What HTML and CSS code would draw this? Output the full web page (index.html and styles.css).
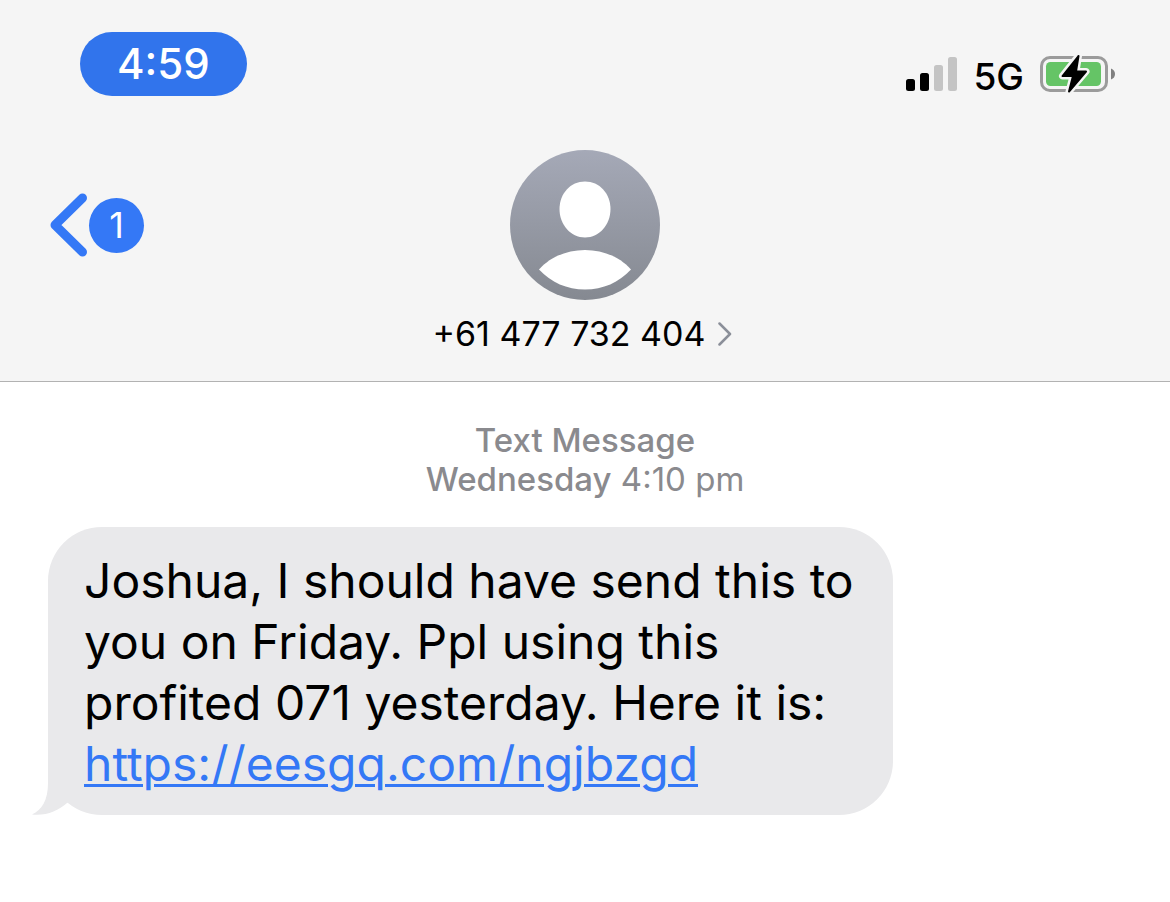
FILE: index.html
```html
<!DOCTYPE html>
<html lang="en">
<head>
<meta charset="utf-8">
<meta name="viewport" content="width=device-width, initial-scale=1">
<title>Messages</title>
<link rel="stylesheet" href="styles.css">
</head>
<body>
<header class="header">
  <div class="status">
    <time class="clock">4:59</time>
    <div class="indicators">
      <svg class="signal" viewBox="0 0 51 34" role="img" aria-label="Signal: 2 of 4 bars">
        <rect x="0" y="22" width="9" height="12" rx="2.5"/>
        <rect x="14" y="16" width="9" height="18" rx="2.5"/>
        <rect class="off" x="28" y="8" width="9" height="26" rx="2.5"/>
        <rect class="off" x="42" y="0" width="9" height="34" rx="2.5"/>
      </svg>
      <span class="network">5G</span>
      <svg class="battery" viewBox="0 0 76 42" role="img" aria-label="Battery charging">
        <rect x="1.5" y="4.5" width="65" height="33" rx="8.5" fill="none" stroke="#9b9b9b" stroke-width="3"/>
        <rect x="6" y="9" width="55" height="24" rx="4.5" fill="#65c466"/>
        <path d="M71 15.500q4 1.500 4 5.500t-4 5.500z" fill="#808080"/>
        <path d="M38.500 3L22.500 23h10.500L29 38.500L46 18.500H36z" fill="#000" stroke="#f5f5f5" stroke-width="7" stroke-linejoin="round"/>
        <path d="M38.500 3L22.500 23h10.500L29 38.500L46 18.500H36z" fill="#000" stroke="#000" stroke-width="2" stroke-linejoin="round"/>
      </svg>
    </div>
  </div>
  <nav class="nav">
    <a class="back" href="#" aria-label="Back, 1 unread">
      <svg class="back-arrow" viewBox="0 0 40 64" aria-hidden="true"><path d="M34.500 5L7 32L34.500 59" fill="none" stroke="#3478f6" stroke-width="9" stroke-linecap="round" stroke-linejoin="round"/></svg>
      <span class="badge">1</span>
    </a>
    <a class="contact" href="#">
      <svg class="avatar" viewBox="0 0 150 150" aria-hidden="true">
        <defs><linearGradient id="shade" x1="0" y1="0" x2="0" y2="1"><stop offset="0" stop-color="#a5a9b7"/><stop offset="1" stop-color="#858991"/></linearGradient></defs>
        <circle cx="75" cy="75" r="75" fill="url(#shade)"/>
        <path d="M75 31.500c14.500 0 25.500 12 25.500 27.500S89.500 87.500 75 87.500 49.500 74.500 49.500 59 60.500 31.500 75 31.500z" fill="#fff"/>
        <path d="M29 119.500C40 107 57 100 75 100s35 7 46 19.500C109 132.500 93 139.500 75 139.500S41 132.500 29 119.500z" fill="#fff"/>
      </svg>
      <span class="number">+61 477 732 404
        <svg class="chevron" viewBox="0 0 14 24" aria-hidden="true"><path d="M1.500 1.500L12 12L1.500 22.500" fill="none" stroke="#8b8f99" stroke-width="2.500" stroke-linecap="round" stroke-linejoin="round"/></svg>
      </span>
    </a>
  </nav>
</header>
<main class="thread">
  <p class="stamp"><span class="strong">Text Message</span><br><span class="strong">Wednesday</span> 4:10 pm</p>
  <div class="bubble">
    <p class="message">Joshua, I should have send this to you on Friday. Ppl using this profited 071 yesterday. Here it is: <a class="link" href="#">https://eesgq.com/ngjbzgd</a></p>
    <svg class="tail" viewBox="0 0 52 54" aria-hidden="true"><path d="M16 0V22C16 39 10 49 0 53.500C14 55 26 50 35 42L52 30V0z" fill="#e9e9eb"/></svg>
  </div>
</main>
</body>
</html>
```
FILE: styles.css
```css
* { box-sizing: border-box; }
body {
  margin: 0;
  background: #fff;
  color: #000;
  font-family: Inter, "Liberation Sans", sans-serif;
}
p { margin: 0; }
a { color: inherit; text-decoration: none; }
svg { display: block; flex: none; }

.header {
  padding: 32px 48px 26px;
  background: #f5f5f5;
  border-bottom: 1px solid #b2b2b2;
}
.status {
  display: flex;
  justify-content: space-between;
  align-items: flex-start;
  padding: 0 6px 0 32px;
}
.clock {
  padding: 0 37px;
  border-radius: 32px;
  background: #3174ec;
  color: #fff;
  font-size: 42px;
  font-weight: 500;
  line-height: 64px;
}
.indicators {
  display: flex;
  align-items: center;
  gap: 16px;
  padding-top: 20px;
}
.signal { width: 51px; height: 34px; }
.off { fill: #c4c4c4; }
.network {
  padding-top: 6px;
  font-size: 37px;
  font-weight: 450;
  line-height: 38px;
}
.battery { width: 76px; height: 42px; }

.nav {
  display: grid;
  grid-template-columns: 1fr auto 1fr;
  align-items: start;
  padding-top: 54px;
}
.back {
  display: flex;
  align-items: center;
  gap: 1px;
  height: 150px;
  justify-self: start;
}
.back-arrow { width: 40px; height: 64px; }
.badge {
  width: 55px;
  border-radius: 50%;
  background: #3478f6;
  color: #fff;
  font-size: 36px;
  line-height: 55px;
  text-align: center;
}
.contact {
  display: flex;
  flex-direction: column;
  align-items: center;
  gap: 12px;
}
.avatar { width: 150px; height: 150px; }
.number {
  display: flex;
  align-items: center;
  gap: 12px;
  padding-right: 6px;
  font-size: 34px;
  line-height: 43px;
}
.chevron { width: 14px; height: 24px; }

.thread { padding: 39px 48px; }
.stamp {
  color: #8a8a8e;
  font-size: 33px;
  line-height: 39px;
  text-align: center;
}
.strong { font-weight: 500; }
.bubble {
  position: relative;
  width: fit-content;
  max-width: 845px;
  margin-top: 28px;
  padding: 23px 36px 21px;
  border-radius: 54px;
  background: #e9e9eb;
}
.message { font-size: 48px; line-height: 61px; }
.link {
  color: #3478f6;
  text-decoration: underline;
  text-decoration-thickness: 3px;
  text-underline-offset: 3px;
}
.tail {
  position: absolute;
  left: -16px;
  bottom: 0;
  width: 52px;
  height: 54px;
}
```
